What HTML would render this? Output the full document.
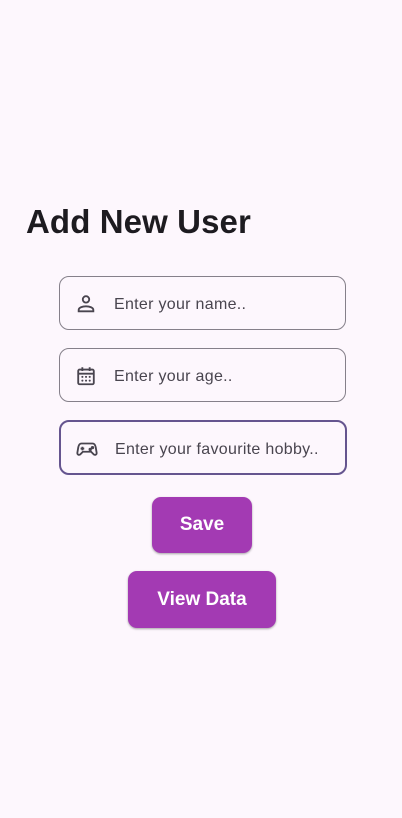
<!DOCTYPE html>
<html><head><meta charset="utf-8"><style>
body{margin:0;width:402px;height:818px;background:#fdf7fd;font-family:"Liberation Sans",sans-serif;position:relative;overflow:hidden}
h1{position:absolute;left:26px;top:203px;margin:0;font-size:33px;font-weight:bold;color:#1d1b20;letter-spacing:0.1px}
.f{position:absolute;left:59px;width:285px;height:52px;border:1px solid #85808a;border-radius:10px;box-sizing:content-box}
.f.a{border:2px solid #65558f;left:59px;width:284px;height:51px}
.f svg{position:absolute;left:15px;top:16px}
.f span{position:absolute;left:54px;top:19px;font-size:16px;color:#49454f;letter-spacing:0.3px}
.b{position:absolute;background:#a33ab3;color:#fff;font-weight:bold;font-size:19px;border-radius:9px;text-align:center;box-shadow:0 1px 2px rgba(0,0,0,.35)}
</style></head><body>
<h1>Add New User</h1>
<div class="f" style="top:276px"><svg width="22" height="22" viewBox="0 0 24 24" fill="none" stroke="#49454f" stroke-width="2"><circle cx="12" cy="7" r="3.5"/><path d="M4 20v-1.5c0-2.5 4-4 8-4s8 1.5 8 4V20z"/></svg><span>Enter your name..</span></div>
<div class="f" style="top:348px"><svg width="22" height="22" viewBox="0 0 24 24" fill="none" stroke="#49454f" stroke-width="2"><rect x="3.5" y="5" width="17" height="16" rx="1.5"/><path d="M3.5 9.5h17M8 2.5v4M16 2.5v4"/><path d="M8 13h.1M12 13h.1M16 13h.1M8 17h.1M12 17h.1M16 17h.1" stroke-width="2.2" stroke-linecap="round"/></svg><span>Enter your age..</span></div>
<div class="f a" style="top:420px"><svg width="22" height="22" viewBox="0 0 24 24" fill="none" stroke="#49454f" stroke-width="2"><path d="M6 6h12c2 0 3 1.5 3.5 4l1 6c.3 2-1.5 3-3 2l-3-3H7.5l-3 3c-1.5 1-3.3 0-3-2l1-6C3 7.5 4 6 6 6z"/><path d="M7 9.5v4M5 11.5h4"/><circle cx="15.5" cy="12.5" r=".8" fill="#49454f"/><circle cx="18" cy="10.5" r=".8" fill="#49454f"/></svg><span>Enter your favourite hobby..</span></div>
<div class="b" style="left:152px;top:497px;width:100px;height:56px;line-height:56px">Save</div>
<div class="b" style="left:128px;top:571px;width:148px;height:57px;line-height:57px">View Data</div>
</body></html>
